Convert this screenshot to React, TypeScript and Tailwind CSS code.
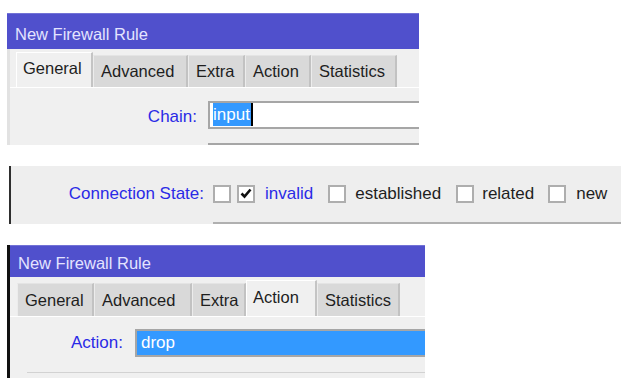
import React from "react";

interface TabItem {
  name: string;
  width: number;
}

const font = { fontFamily: '"Liberation Sans", Arial, sans-serif' };

const TitleBar = ({ height, pad }: { height: string; pad: string }) => (
  <div
    className={`${height} ${pad} flex items-center bg-[#5050cc] border-t border-[#7272d6] pl-[8px] text-[16.5px] text-[#e4e4ff]`}
  >
    New Firewall Rule
  </div>
);

const Tabs = ({
  tabs,
  active,
  height,
  tabH,
  activeH,
  pad,
}: {
  tabs: TabItem[];
  active: string;
  height: string;
  tabH: string;
  activeH: string;
  pad: string;
}) => (
  <div className={`${height} flex items-end ${pad} bg-[#f0f0f0]`}>
    {tabs.map((t) =>
      t.name === active ? (
        <div
          key={t.name}
          style={{ width: t.width }}
          className={`${activeH} flex items-center pl-[6px] bg-[#f0f0f0] border-t border-l border-white border-r-2 border-r-[#c4c4c4] text-[16.5px] text-[#1e1e1e] pb-[3px]`}
        >
          {t.name}
        </div>
      ) : (
        <div
          key={t.name}
          style={{ width: t.width }}
          className={`${tabH} flex items-center pl-[7px] bg-[#d9d9d9] border-t border-t-[#e4e4e4] border-l border-l-[#ececec] border-r-2 border-r-[#c2c2c2] text-[16.5px] text-[#1e1e1e]`}
        >
          {t.name}
        </div>
      )
    )}
  </div>
);

export default function App() {
  const tabs1: TabItem[] = [
    { name: "General", width: 77 },
    { name: "Advanced", width: 95 },
    { name: "Extra", width: 57 },
    { name: "Action", width: 66 },
    { name: "Statistics", width: 86 },
  ];
  const tabs3: TabItem[] = [
    { name: "General", width: 77 },
    { name: "Advanced", width: 98 },
    { name: "Extra", width: 54 },
    { name: "Action", width: 71 },
    { name: "Statistics", width: 83 },
  ];

  const Box = ({ checked }: { checked?: boolean }) => (
    <div className="w-[18px] h-[18px] shrink-0 bg-white border-2 border-[#aeaeae] flex items-center justify-center">
      {checked && (
        <svg width="12" height="11" viewBox="0 0 12 11">
          <path d="M1.5 5.5 L4.5 8.5 L10.5 1.5" stroke="#111" strokeWidth="2.6" fill="none" />
        </svg>
      )}
    </div>
  );

  return (
    <div className="w-[625px] h-[392px] bg-white overflow-hidden flex flex-col" style={font}>
      {/* first window: General tab */}
      <div className="mt-[13px] ml-[7px] w-[412px] flex flex-col">
        <TitleBar height="h-[36px]" pad="pt-[5px]" />
        <div className="border-l-[3px] border-[#e2e2e2]">
          <Tabs
            tabs={tabs1}
            active="General"
            height="h-[38px]"
            tabH="h-[32px]"
            activeH="h-[35px]"
            pad="pl-[6px]"
          />
          <div className="h-[58px] overflow-hidden bg-[#f0f0f0] border-t border-white pt-[12px]">
            <div className="flex items-center">
              <div className="w-[187px] pt-[4px] text-right text-[17px] text-[#2a2ae6]">Chain:</div>
              <div className="ml-[11px] flex-1 h-[28px] bg-white border-t-2 border-l-2 border-b-2 border-[#a6a6a6] flex items-center pl-[3px]">
                <span className="bg-[#3399ff] text-white text-[17px] leading-[23px] pr-[1px]">input</span>
                <span className="w-[2px] h-[23px] bg-black"></span>
              </div>
            </div>
            <div className="mt-[13px] ml-[198px] h-[20px] border-t-2 border-l-2 border-[#a6a6a6] bg-white"></div>
          </div>
        </div>
      </div>

      {/* connection state row */}
      <div className="mt-[21px] ml-[9px] w-[612px] h-[58px] overflow-hidden bg-[#eeeeee] border-l-2 border-[#2e2e2e]">
        <div className="flex items-center mt-[15px] text-[17px]">
          <div className="w-[193px] text-right text-[#2a2ae6]">Connection State:</div>
          <div className="ml-[9px] flex items-center">
            <Box />
            <div className="ml-[6px]">
              <Box checked />
            </div>
            <span className="ml-[10px] text-[#2a2ae6]">invalid</span>
            <div className="ml-[15px]">
              <Box />
            </div>
            <span className="ml-[9px] text-[#1e1e1e]">established</span>
            <div className="ml-[15px]">
              <Box />
            </div>
            <span className="ml-[8px] text-[#1e1e1e]">related</span>
            <div className="ml-[14px]">
              <Box />
            </div>
            <span className="ml-[10px] text-[#1e1e1e]">new</span>
          </div>
        </div>
        <div className="mt-[15px] ml-[202px] h-[20px] border-t-2 border-l-2 border-[#b0b0b0] bg-[#f4f4f4]"></div>
      </div>

      {/* second window: Action tab */}
      <div className="mt-[21px] ml-[7px] w-[418px] flex flex-col border-l-[3px] border-[#111]">
        <TitleBar height="h-[32px]" pad="pt-[3px]" />
        <Tabs
          tabs={tabs3}
          active="Action"
          height="h-[39px]"
          tabH="h-[33px]"
          activeH="h-[36px]"
          pad="pl-[7px]"
        />
        <div className="h-[62px] bg-[#f0f0f0] border-t border-white pt-[12px]">
          <div className="flex items-center">
            <div className="w-[113px] text-right text-[17px] text-[#2a2ae6]">Action:</div>
            <div className="ml-[12px] flex-1 h-[28px] bg-[#3399ff] border-t-2 border-l-2 border-b-2 border-[#a6a6a6] flex items-center pl-[4px] text-[17px] text-white">
              drop
            </div>
          </div>
          <div className="mt-[15px] ml-[17px] h-[1px] bg-[#d2d2d2]"></div>
        </div>
      </div>
    </div>
  );
}
